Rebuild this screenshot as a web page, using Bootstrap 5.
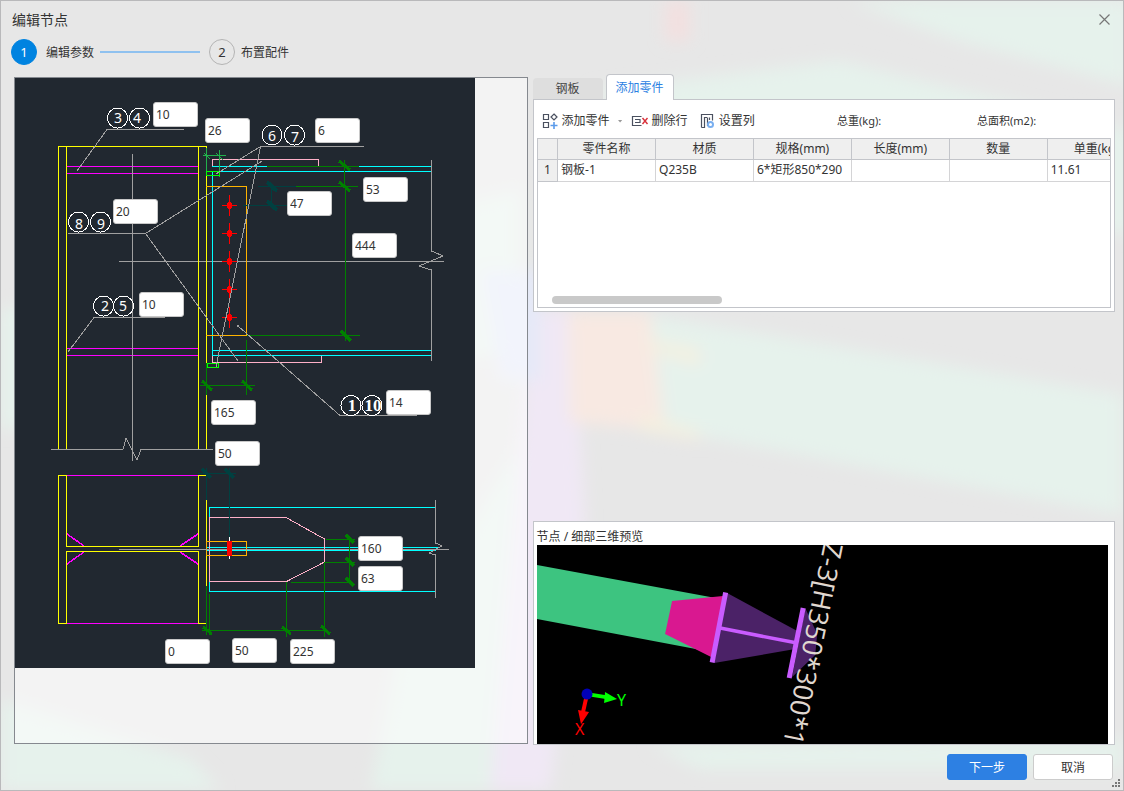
<!DOCTYPE html>
<html lang="zh-CN">
<head>
<meta charset="utf-8">
<meta name="viewport" content="width=device-width, initial-scale=1">
<title>编辑节点</title>
<link href="https://cdn.jsdelivr.net/npm/bootstrap@5.3.0/dist/css/bootstrap.min.css" rel="stylesheet">
<style>
  body { font-family: "Noto Sans", "Noto Sans CJK SC", sans-serif; font-size: 12px; line-height: 18px; color: #333; background: #e7e7e7; }
  .dialog { min-height: 100vh; border: 1px solid #b9b9bb; overflow: hidden; isolation: isolate; }
  .backdrop-art { position: absolute; inset: 0; width: 100%; height: 100%; z-index: -1; }
  .title-row { height: 38px; padding: 0 11px; }
  .title-row h1 { font-size: 14px; }
  .close-btn { width: 15px; height: 15px; }
  .steps { height: 26px; padding-left: 10px; }
  .step-dot { width: 26px; height: 26px; border: 1px solid #b4b4b4; font-size: 13px; }
  .step-dot.current { background: #0083e0; border-color: #0083e0; color: #fff; }
  .step-label { padding-top: 2px; margin-left: 9px; }
  .step-label + .step-line { width: 100px; height: 2px; background: #8fc1ef; margin: 0 9px 0 6px; }
  .step-dot:not(.current) + .step-label { margin-left: 6px; }
  .work { gap: 5px; padding: 9px 8px 0 13px; }
  .left-pane { flex: 513 1 0; margin-top: 3px; border: 1px solid #85898f; background: rgba(255,255,255,.5); }
  .right-pane { flex: 584 1 0; min-width: 0; margin-bottom: -1px; }
  .cad { width: 460px; height: 590px; background: #212830; }
  .cad svg { display: block; }
  .dim { position: absolute; width: 45px; height: 25px; padding: 0 3px 1px 2px; border: 1px solid #c8c8c8; border-radius: 3px; background: #fff; color: #333; line-height: 18px; }
  #d-top-stiff { left: 138px; top: 24px; }   #d-gap { left: 190px; top: 40px; }
  #d-weld { left: 300px; top: 40px; }        #d-edge { left: 348px; top: 99px; }
  #d-bolt { left: 272px; top: 113px; }       #d-web { left: 98px; top: 121px; }
  #d-height { left: 337px; top: 155px; }     #d-low-stiff { left: 124px; top: 214px; }
  #d-plate { left: 371px; top: 312px; }      #d-width { left: 196px; top: 322px; }
  #d-offset { left: 200px; top: 363px; }     #d-flange { left: 343px; top: 458px; }
  #d-taper { left: 343px; top: 488px; }      #d-start { left: 150px; top: 561px; }
  #d-straight { left: 217px; top: 560px; }   #d-slope { left: 275px; top: 561px; }
  .part-tabs { gap: 3px; height: 25px; border: 0; position: relative; z-index: 1; }
  .part-tabs .nav-link { height: 21px; width: 70px; padding: 0; border: 0; border-radius: 4px 4px 0 0; margin: 0; background: #dedede; color: #444; }
  .part-tabs .nav-link.active { height: 26px; width: 68px; border: 1px solid #c3c5ca; border-bottom: 0; background: #fff; color: #2b80e2; margin-bottom: -1px; }
  .parts-box, .view-box { background: #fff; border: 1px solid #c3c5ca; }
  .parts-box { height: 213px; padding: 0 3px 3px; }
  .toolbar { height: 38px; padding: 4px 0 0 5px; }
  .tool { padding: 0; border: 0; background: none; color: #333; gap: 3px; }
  .tool svg { flex: none; }
  .caret { width: 5px; height: 3px; background: #999; clip-path: polygon(0 0,100% 0,50% 100%); }
  .totals { font-size: 11px; }
  .total-a { width: 140px; }
  .total-b { width: 134px; }
  .grid-wrap { border: 1px solid #c3c5ca; overflow: hidden; }
  .parts-grid { table-layout: fixed; width: 706px; border-collapse: collapse; }
  .parts-grid th, .parts-grid td { border-right: 1px solid #d4d4d6; border-bottom: 1px solid #d4d4d6; padding: 0 3px; white-space: nowrap; }
  .parts-grid thead th { height: 20px; background: #efefef; border-color: #c3c5ca; text-align: center; font-weight: 400; }
  .parts-grid tbody th { background: #efefef; font-weight: 400; text-align: center; border-color: #c3c5ca; }
  .parts-grid tbody > tr > * { height: 22px; }
  .parts-grid col:first-child { width: 20px; }
  .thumb-bar { width: 170px; height: 8px; border-radius: 4px; background: #c9c9c9; margin: auto 0 3px 14px; }
  .view-box { padding: 0 6px 0 3px; }
  .view-box h2 { font-size: 12px; line-height: 18px; padding-top: 6px; margin: 0; font-weight: 400; height: 23px; }
  .view-box svg { display: block; width: 100%; height: auto; background: #000; }
  .foot { gap: 6px; padding: 10px 10px; }
  .foot .btn { width: 80px; height: 26px; padding: 2px 0 0; font-size: 12px; border-radius: 3px; }
  .btn-next { background: #2d80e3; border-color: #2d80e3; color: #fff; }
  .btn-cancel { background: #fff; border-color: #ccc; color: #333; }
  .grip { position: absolute; right: 3px; bottom: 3px; }
</style>
</head>
<body>
<div class="dialog position-relative d-flex flex-column">
  <svg class="backdrop-art" viewBox="0 0 1124 791" preserveAspectRatio="none" aria-hidden="true">
    <defs><filter id="soft"><feGaussianBlur stdDeviation="8"/></filter></defs>
    <g filter="url(#soft)">
      <path d="M850 0H1130V85L960 40ZM590 90L840 60L1130 130V235L900 180L650 120Z" fill="#e6f2ec"/>
      <path d="M650 315L1124 395V515L640 425Z" fill="#e6f2ec"/>
      <path d="M0 310L520 190V350L0 430Z" fill="#e6f2ec"/>
      <path d="M400 640L530 430L520 791H370Z" fill="#e6f2ec"/>
      <path d="M0 700L190 760L220 791H0Z" fill="#e6f2ec"/>
      <path d="M650 745L1124 740V770H700Z" fill="#e6f2ec"/>
      <path d="M530 310H575L585 520L550 791H490Z" fill="#f0e8f5"/>
      <path d="M480 270H540V380H500Z" fill="#e5e9f8"/>
      <path d="M568 312H650L665 430L570 422Z" fill="#f8e9e2"/>
      <path d="M650 340L700 350V365L650 350ZM640 415L700 432V440L640 430Z" fill="#f5f0df"/>
      <path d="M665 0H690V40H665Z" fill="#f3e0e0"/>
    </g>
  </svg>

  <header>
    <div class="title-row d-flex align-items-center justify-content-between">
      <h1 class="m-0 fw-normal lh-1">编辑节点</h1>
      <button type="button" class="close-btn btn p-0 border-0 d-flex" aria-label="关闭">
        <svg width="15" height="15" viewBox="0 0 15 15"><path d="M2.500 1.500L12.500 11.500M12.500 1.500L2.500 11.500" stroke="#777" stroke-width="1.200"/></svg>
      </button>
    </div>
    <div class="steps d-flex align-items-center">
      <span class="step-dot current rounded-circle d-flex align-items-center justify-content-center">1</span>
      <span class="step-label">编辑参数</span>
      <span class="step-line"></span>
      <span class="step-dot rounded-circle d-flex align-items-center justify-content-center">2</span>
      <span class="step-label">布置配件</span>
    </div>
  </header>

  <main class="work d-flex flex-grow-1">
    <section class="left-pane">
      <div class="cad position-relative">
        <svg width="460" height="590" viewBox="15 78 460 590" fill="none" shape-rendering="crispEdges" aria-label="节点参数图">
          <!-- column elevation -->
          <path stroke="#f0f" d="M66 166.500H198M66 173.500H198M66 348.500H198M66 355.500H198M66 475.500H198M66 623.500H198"/>
          <path stroke="#a0a0a0" d="M132.500 154V461M119 261.500H444M51 449.500H123L126 438L137 460L141 449.500H213"/>
          <path stroke="#ff0" d="M58.500 449V146.500H206.500V363M66.500 146V449M198.500 146V449M206.500 395V449"/>
          <!-- beam elevation -->
          <path stroke="#0ff" d="M212 166.500H432M212 171.500H431M212 350.500H431M212 355.500H431M212.500 171V357"/>
          <path stroke="#ffb0c8" d="M212.500 166V159.500H318.500V166M212.500 356V362.500H321.500V356"/>
          <path stroke="#ffb400" d="M206 186.500H246.500V335.500H206"/>
          <path stroke="#008000" d="M267 166.500H359M296 186.500H358M344.500 160V187M345.500 187V341M247 335.500H360M206.500 363V395M246.500 340V395M200 385.500H255"/>
          <path stroke="#008000" stroke-width="3" d="M339 161L350 170M339 182L350 191M341 331L351 341M202 381L212 390M242 381L252 390"/>
          <path stroke="#22b14c" d="M206.500 148V176M219.500 150V177M203 155.500H226M204 153L210 159M216 153L223 160"/>
          <path stroke="#0f0" d="M206.500 171.500H219.500V175.500H206.500ZM207.500 363.500H218.500V367.500H207.500Z"/>
          <path stroke="#004040" d="M258 186.500H296M243 205.500H287M271.500 186V205"/>
          <path stroke="#004040" stroke-width="4" d="M267 182L277 191M267 201L277 210"/>
          <path stroke="#a0a0a0" d="M431.500 160V251L443 256L419 266L431.500 270V361"/>
          <path stroke="red" d="M222 205.500H237M222 233.500H237M222 261.500H237M222 289.500H237M222 317.500H237M229.500 195V216M229.500 223V244M229.500 251V272M229.500 279V300M229.500 307V328"/>
          <g fill="red"><ellipse cx="229.500" cy="205.500" rx="2.500" ry="4"/><ellipse cx="229.500" cy="233.500" rx="2.500" ry="4"/><ellipse cx="229.500" cy="261.500" rx="2.500" ry="4"/><ellipse cx="229.500" cy="289.500" rx="2.500" ry="4"/><ellipse cx="229.500" cy="317.500" rx="2.500" ry="4"/></g>
          <!-- leaders -->
          <path stroke="#a0a0a0" d="M77 171L107 129.500H184M68 233.500H145.500L262 161M145.500 233.500L238 361M216 174L260.500 146.500H364M260.500 147L216 367M68 352L94 317.500H165M238 326L340 415.500H417"/>
          <rect x="237" y="325" width="2" height="2" fill="#a0a0a0"/>
          <!-- plan section -->
          <path stroke="#f0f" stroke-width="1.500" d="M67 534L84 546M198 534L180 546M67 564L84 552M198 564L180 552"/>
          <path stroke="#ff0" d="M66 475.500H58.500V623.500H66M66.500 475V546.500H198.500V475.500H206M66.500 624V551.500H198.500V623.500H206M206.500 500V586"/>
          <path stroke="#0ff" d="M435 507.500H209.500V591.500H435M206 547.500H440M206 550.500H436"/>
          <path stroke="#ffb0c8" d="M209.500 517.500H286L324.500 539V562L286.500 581.500H209.500Z"/>
          <path stroke="#ffb400" d="M206.500 541.500H246.500V555.500H206.500Z"/>
          <path stroke="#a0a0a0" d="M119 549.500H449M435.500 500V543L442 546L429 553L435.500 555V598"/>
          <path stroke="#004040" d="M206.500 468V500M229.500 468V538M198 473.500H236"/>
          <path stroke="#004040" stroke-width="4" d="M202 469L211 478M225 469L234 478"/>
          <path stroke="#fff" d="M229.500 537V559"/><rect x="227" y="541" width="5" height="15" fill="red"/>
          <path stroke="#008000" d="M326 539.500H355M349.500 536V583M325 562.500H355M291 582.500H353M206.500 586V635M209.500 594V635M202 630.500H328M286.500 582V637M324.500 562V637"/>
          <path stroke="#008000" stroke-width="3" d="M346 535L354 543M346 558L354 566M346 578L354 586M203 627L212 634M282 627L291 634M321 626L330 634"/>
          <g stroke="#fff">
            <circle cx="117.500" cy="118" r="10"/><circle cx="139.500" cy="118" r="10"/><circle cx="272" cy="135" r="10"/><circle cx="294.500" cy="135" r="10"/><circle cx="78.500" cy="222" r="10"/><circle cx="100.500" cy="222" r="10"/><circle cx="103.500" cy="306" r="10"/><circle cx="123.500" cy="306" r="10"/><circle cx="351" cy="405.500" r="10"/><circle cx="372" cy="405.500" r="10"/>
          </g>
          <g fill="#fff" font-family="Noto Sans, sans-serif" font-size="14" text-anchor="middle">
            <text x="118" y="123">3</text><text x="137" y="123">4</text><text x="272" y="141">6</text><text x="295" y="142">7</text><text x="79" y="229">8</text><text x="101" y="229">9</text><text x="105" y="311">2</text><text x="123" y="311">5</text>
          </g>
          <g fill="#fff" font-family="Liberation Serif, serif" font-size="17" font-weight="bold" text-anchor="middle"><text x="352" y="411">1</text><text x="373" y="411">10</text></g>
        </svg>
        <input class="dim" id="d-top-stiff" aria-label="上加劲板厚度" value="10">
        <input class="dim" id="d-gap" aria-label="间隙" value="26">
        <input class="dim" id="d-weld" aria-label="垫板厚度" value="6">
        <input class="dim" id="d-edge" aria-label="边距" value="53">
        <input class="dim" id="d-bolt" aria-label="螺栓边距" value="47">
        <input class="dim" id="d-web" aria-label="盖板厚度" value="20">
        <input class="dim" id="d-height" aria-label="连接板高度" value="444">
        <input class="dim" id="d-low-stiff" aria-label="下加劲板厚度" value="10">
        <input class="dim" id="d-plate" aria-label="连接板厚度" value="14">
        <input class="dim" id="d-width" aria-label="连接板宽度" value="165">
        <input class="dim" id="d-offset" aria-label="螺栓偏移" value="50">
        <input class="dim" id="d-flange" aria-label="端部宽度" value="160">
        <input class="dim" id="d-taper" aria-label="收进宽度" value="63">
        <input class="dim" id="d-start" aria-label="起始距离" value="0">
        <input class="dim" id="d-straight" aria-label="直段长度" value="50">
        <input class="dim" id="d-slope" aria-label="斜段长度" value="225">
      </div>
    </section>

    <section class="right-pane d-flex flex-column">
      <div class="nav nav-tabs part-tabs align-items-end" role="tablist">
        <button type="button" class="nav-link" role="tab">钢板</button>
        <button type="button" class="nav-link active" role="tab">添加零件</button>
      </div>
      <div class="parts-box d-flex flex-column">
        <div class="toolbar d-flex align-items-center">
          <button type="button" class="tool d-flex align-items-center">
            <svg width="17" height="17" viewBox="0 0 17 17" fill="none" stroke="#4b5160" stroke-width="1.200"><path d="M1.500 1.500h5v5h-5zM1.500 9.500h5v5h-5zM12 1L15 4L12 7L9 4Z"/><path d="M12 9v7M8.500 12.500h7" stroke="#5b9bea" stroke-width="1.600"/></svg>添加零件
          </button>
          <span class="caret ms-2 me-2"></span>
          <button type="button" class="tool d-flex align-items-center">
            <svg width="18" height="16" viewBox="0 0 18 16" fill="none" stroke="#4b5160" stroke-width="1.200"><path d="M10.500 3.500H1.500V12.500H10.500M4 6.500H9V9.500H4"/><path d="M11.500 5L16.500 11M16.500 5L11.500 11" stroke="#d8303a" stroke-width="1.400"/></svg>删除行
          </button>
          <button type="button" class="tool d-flex align-items-center ms-2 ps-1">
            <svg width="16" height="16" viewBox="0 0 16 16" fill="none" stroke="#4b5160" stroke-width="1.200"><path d="M1.500 14.500V1.500H12.500V7.500M1.500 14.500H4.500V4.500H7M7.500 4.500V13M9.500 4.500V7"/><circle cx="10.500" cy="11.500" r="2.500" stroke="#79aff0" stroke-width="2"/></svg>设置列
          </button>
          <div class="totals d-flex ms-auto"><span class="total-a">总重(kg):</span><span class="total-b">总面积(m2):</span></div>
        </div>
        <div class="grid-wrap d-flex flex-column flex-grow-1">
          <table class="parts-grid">
            <colgroup><col><col span="7"></colgroup>
            <thead><tr><th></th><th>零件名称</th><th>材质</th><th>规格(mm)</th><th>长度(mm)</th><th>数量</th><th>单重(kg)</th><th></th></tr></thead>
            <tbody><tr><th scope="row">1</th><td>钢板-1</td><td>Q235B</td><td>6*矩形850*290</td><td></td><td></td><td>11.61</td><td></td></tr></tbody>
          </table>
          <div class="thumb-bar"></div>
        </div>
      </div>

      <div class="view-box mt-auto">
        <h2>节点 / 细部三维预览</h2>
        <svg viewBox="536 545 571 199" role="img" aria-label="三维预览">
          <path d="M536 565L720 599L700 650L536 619Z" fill="#3dc480"/>
          <path d="M671 601L722 596L712 658L664 634Z" fill="#d91890"/>
          <path d="M726 593L798 632L794 649L713 663ZM804 608L816 634L814 655L791 677Z" fill="#4b2267"/>
          <path d="M719 628L796 643" stroke="#c95cff" stroke-width="3.500"/>
          <path d="M724.500 592.500L711 662.500M802 608L788 678" stroke="#c95cff" stroke-width="5"/>
          <text transform="translate(823 541) rotate(101.500)" font-family="Open Sans, sans-serif" font-size="27" fill="#e0d8d0">Z-3[H350*300*1</text>
          <path d="M586 694L605 697" stroke="#0f0" stroke-width="4"/><path d="M604 692L616 699L603 703Z" fill="#0f0"/>
          <path d="M586 694L582 712" stroke="red" stroke-width="4"/><path d="M577 710L588 712L580 724Z" fill="red"/>
          <circle cx="586" cy="694" r="5.500" fill="#0000b8"/>
          <g font-family="Noto Sans, sans-serif" font-size="16"><text x="616" y="706" fill="#0f0">Y</text><text x="574" y="735" fill="red">X</text></g>
        </svg>
      </div>
    </section>
  </main>

  <footer class="foot d-flex justify-content-end">
    <button type="button" class="btn btn-next">下一步</button>
    <button type="button" class="btn btn-cancel">取消</button>
  </footer>
  <svg class="grip" width="8" height="8" viewBox="0 0 8 8" fill="#777" aria-hidden="true"><path d="M6 0h2v2h-2zM3 3h2v2h-2zM6 3h2v2h-2zM0 6h2v2h-2zM3 6h2v2h-2zM6 6h2v2h-2z"/></svg>
</div>
<script src="https://cdn.jsdelivr.net/npm/bootstrap@5.3.0/dist/js/bootstrap.bundle.min.js"></script>
</body>
</html>
